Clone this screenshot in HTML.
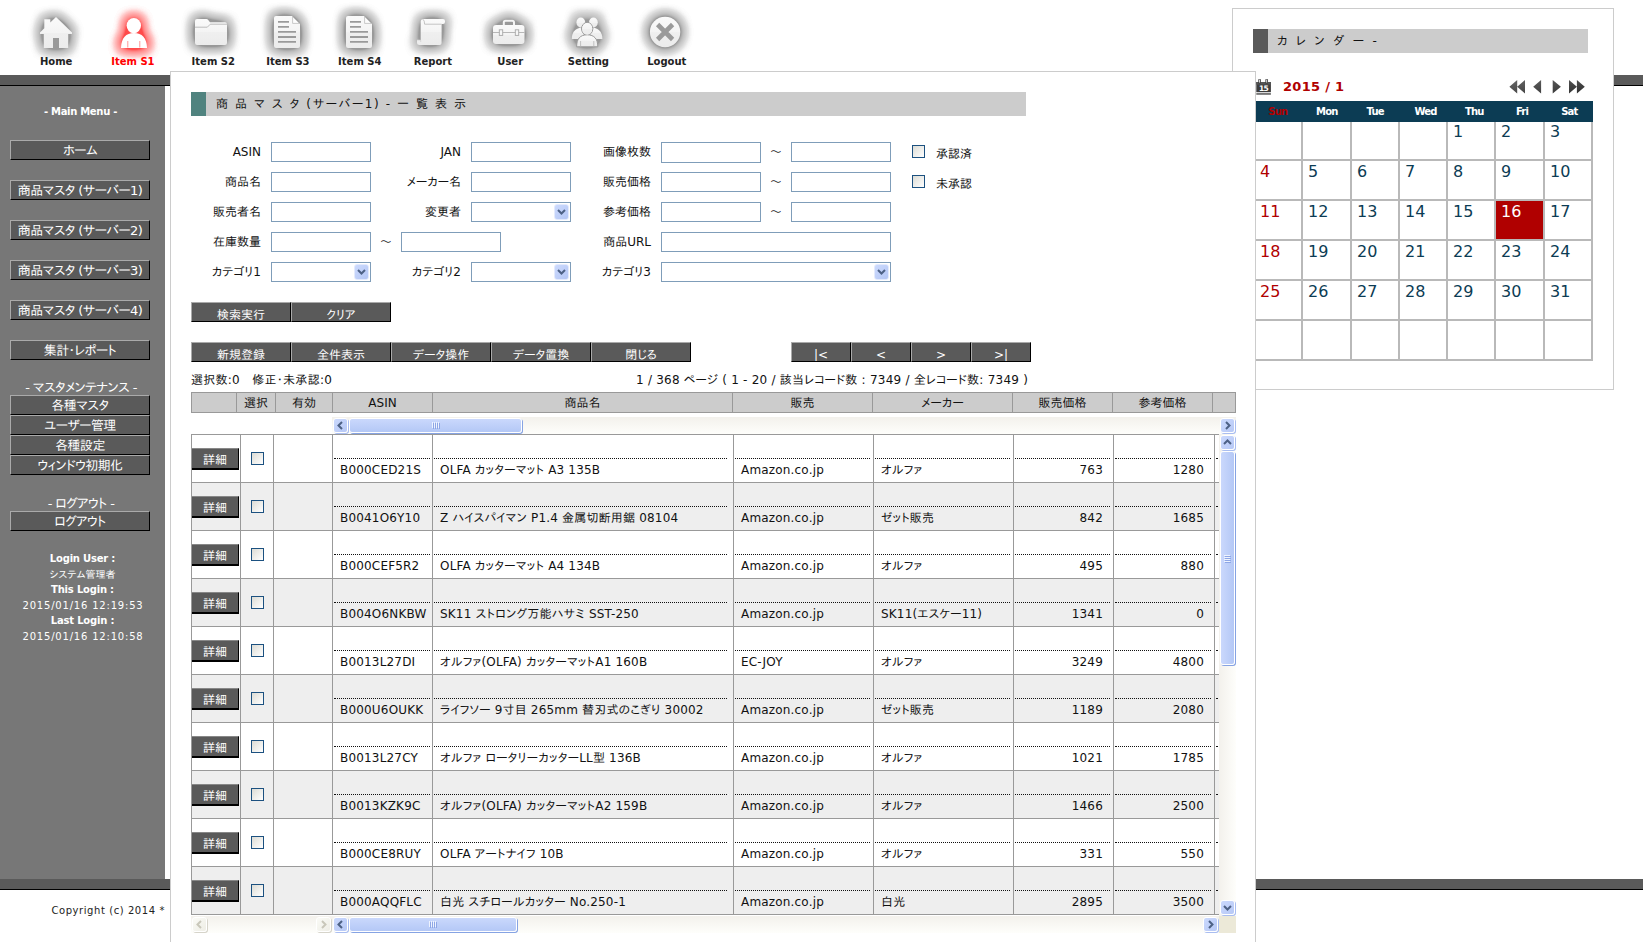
<!DOCTYPE html>
<html lang="ja"><head><meta charset="utf-8"><title>商品マスタ (サーバー1) - 一覧表示</title>
<style>
html,body{margin:0;padding:0;}
body{width:1643px;height:942px;overflow:hidden;background:#fff;position:relative;
 font-family:"DejaVu Sans","Liberation Sans","IPAPGothic","Noto Sans CJK JP",sans-serif;font-size:12px;color:#111;font-feature-settings:"palt";}
div,span,table,td,th{box-sizing:border-box;}
.abs{position:absolute;}
#topbar{position:absolute;left:0;top:75px;width:1643px;height:11px;background:#5a5a5a;border-bottom:1px solid #000;}
#botbar{position:absolute;left:0;top:879px;width:1643px;height:11px;background:#5a5a5a;border-bottom:1px solid #000;}
#side{position:absolute;left:0;top:86px;width:165px;height:793px;background:#777;color:#fff;}
#main{position:absolute;left:170px;top:71px;width:1086px;height:880px;background:#fff;border:1px solid #ccc;}
#cal{position:absolute;left:1232px;top:8px;width:382px;height:382px;background:#fff;border:1px solid #ccc;}
.nav{position:absolute;top:0;width:90px;height:72px;text-align:center;}
.nav svg{position:absolute;left:13px;top:0;}
.nav b{position:absolute;left:0;width:90px;top:56px;font-size:10px;line-height:12px;color:#222;font-weight:bold;}
.nav.on b{color:#f00;}
.sbtn{position:absolute;left:10px;width:140px;height:20px;background:#5a5a5a;border:1px solid;border-color:#aaa #000 #000 #aaa;
 color:#fff;font-size:13px;line-height:20px;text-align:center;letter-spacing:-0.6px;}
.shead{position:absolute;left:0;width:162px;text-align:center;color:#fff;font-size:13px;line-height:15px;letter-spacing:-0.6px;}
.sinfo{position:absolute;left:0;width:165px;text-align:center;color:#fff;font-size:10px;line-height:15.5px;}
.sinfo b{letter-spacing:-0.2px;}
.sinfo .dt{letter-spacing:0.8px;margin-left:1px;}
.title{position:absolute;background:#ccc;height:24px;line-height:24px;font-size:12px;color:#111;white-space:pre;}
.title i{position:absolute;left:0;top:0;width:15px;height:24px;}
.lbl{position:absolute;width:80px;text-align:right;font-size:12px;line-height:20px;height:20px;white-space:nowrap;}
.inp{position:absolute;height:20px;border:1px solid #7f9db9;background:#fff;}
.sel{position:absolute;height:20px;border:1px solid #7f9db9;background:#fff;}
.sel i{position:absolute;right:1px;top:1px;width:13px;height:14px;border-radius:3px;background:linear-gradient(135deg,#ccdafd,#b4c6f5);border:1px solid #e3eafd;box-sizing:content-box;}
.sel svg{position:absolute;right:4px;top:6px;}
.cb{position:absolute;width:13px;height:13px;border:1px solid #1c5180;background:linear-gradient(135deg,#dcdcd5,#fff);}
.btn{position:absolute;height:20px;background:#5a5a5a;color:#fff;font-size:12px;line-height:24px;text-align:center;border:1px solid;border-color:#aaa #000 #000 #aaa;white-space:pre;overflow:hidden;}
.hd{position:absolute;top:392px;height:21px;background:#ccc;border:1px solid #999;border-left:none;text-align:center;font-size:12px;line-height:21px;}
.row{position:absolute;left:191px;width:1029px;height:49px;border:1px solid #999;}
.row.alt{background:#eee;}
.row .c{position:absolute;top:0;height:47px;border-left:1px solid #999;}
.row .d{position:absolute;left:1px;right:6px;top:23px;height:24px;border-top:1px dotted #111;font-size:12px;line-height:22px;padding-left:6px;white-space:nowrap;overflow:hidden;letter-spacing:0.18px;}
.row .d.r{text-align:right;padding-right:3px;}
.det{position:absolute;left:0;top:13px;width:47px;height:22px;background:#5a5a5a;border-bottom:2px solid #000;border-right:1px solid #000;border-top:1px solid #888;color:#fff;text-align:center;line-height:23px;font-size:12px;}

.trk{position:absolute;background:linear-gradient(#f3f1ec,#fefefb);}
.trkv{position:absolute;background:linear-gradient(90deg,#f3f1ec,#fefefb);}
.sb{position:absolute;width:15px;height:15px;border:1px solid #fff;border-radius:3px;background:linear-gradient(135deg,#cbd9fd,#b6c8f6);box-shadow:1px 1px 0 #a9bdf0;}
.sb.dis{background:linear-gradient(135deg,#fafaf6,#eeede5);box-shadow:1px 1px 0 #d6d4ca;border-color:#fff;}
.sb svg{position:absolute;left:0;top:0;}
.th{position:absolute;border:1px solid #fff;border-radius:3px;box-shadow:1px 1px 0 #86a3e3;}
.thh{background:linear-gradient(#cad8fc,#b4c8f6);}
.thv{background:linear-gradient(90deg,#cad8fc,#b4c8f6);}
</style></head>
<body>
<div id="topbar"></div>
<div id="botbar"></div>
<svg width="0" height="0" style="position:absolute"><defs><filter id="gl" color-interpolation-filters="sRGB" x="-100%" y="-100%" width="300%" height="300%"><feGaussianBlur in="SourceAlpha" stdDeviation="6"/><feComponentTransfer result="a"><feFuncA type="table" tableValues="0 .27 .41 .5 .57 .65 .74 .87 1 1 1 1 1 1 1 1 1 1 1 1 1"/></feComponentTransfer><feFlood flood-color="#999"/><feComposite in2="a" operator="in"/></filter><filter id="glr" color-interpolation-filters="sRGB" x="-100%" y="-100%" width="300%" height="300%"><feGaussianBlur in="SourceAlpha" stdDeviation="6"/><feComponentTransfer result="a"><feFuncA type="table" tableValues="0 .27 .41 .5 .57 .65 .74 .87 1 1 1 1 1 1 1 1 1 1 1 1 1"/></feComponentTransfer><feFlood flood-color="#ff4a4a"/><feComposite in2="a" operator="in"/></filter><linearGradient id="ig" x1="0" y1="0" x2="0" y2="1"><stop offset="0" stop-color="#fafafa"/><stop offset="0.5" stop-color="#f4f4f4"/><stop offset="0.52" stop-color="#efefef"/><stop offset="1" stop-color="#ececec"/></linearGradient></defs></svg>
<div id="nav">
<div class="nav" style="left:11.2px"><svg style="left:12.8px" width="64" height="64" viewBox="0 0 64 64"><g transform="translate(16,17)"><g filter="url(#gl)"><path d="M16 0L32 15.5V17H28.2V31H3.8V17H0V15.5L4.3 11.3V2.2H10.3V5.6z"/></g><g fill="url(#ig)"><path d="M16 0L32 15.5V17H28.2V31H19V21H13V31H3.8V17H0V15.5L4.3 11.3V2.2H10.3V5.6z"/></g></g></svg><b>Home</b></div>
<div class="nav on" style="left:87.9px"><svg style="left:13.9px" width="64" height="64" viewBox="0 0 64 64"><g transform="translate(16,17)"><g filter="url(#glr)"><ellipse cx="15.8" cy="8.6" rx="7.2" ry="7.6"/><path d="M3 31C3.2 21 8 16 16 16S28.8 21 29 31z"/></g><g fill="#fff"><ellipse cx="15.8" cy="8.6" rx="7.2" ry="7.6"/><path d="M3 31C3.2 21 8 16 16 16S28.8 21 29 31z"/><path d="M9.8 24V30.5M21.8 24V30.5" fill="none" stroke="#ff8a8a" stroke-width="0.9"/></g></g></svg><b>Item S1</b></div>
<div class="nav" style="left:168.3px"><svg style="left:10.9px" width="64" height="64" viewBox="0 0 64 64"><g transform="translate(16,17)"><g filter="url(#gl)"><path d="M0 4Q0 2 2 2H11.5Q12.5 2 13.2 3L15 5.3H30Q32 5.3 32 7.3V26Q32 28 30 28H2Q0 28 0 26z"/></g><g fill="url(#ig)"><path d="M0 4Q0 2 2 2H11.5Q12.5 2 13.2 3L15 5.3H30Q32 5.3 32 7.3V26Q32 28 30 28H2Q0 28 0 26z"/><path d="M0 10.2H12.3L15.3 7.2H32" fill="none" stroke="#b5b5b5" stroke-width="0.9"/></g></g></svg><b>Item S2</b></div>
<div class="nav" style="left:242.9px"><svg style="left:12.1px" width="64" height="64" viewBox="0 0 64 64"><g transform="translate(16,17)"><g filter="url(#gl)"><path d="M5 -1H21L29 7V29Q29 31 27 31H5Q3 31 3 29V1Q3 -1 5 -1z"/></g><g fill="url(#ig)"><path d="M5 -1H21L29 7V29Q29 31 27 31H5Q3 31 3 29V1Q3 -1 5 -1z"/><path d="M21.6 -0.4L28.4 6.4H21.6z" fill="#fdfdfd" stroke="#b4b4b4" stroke-width="0.7"/><path d="M7 4.9H18M7 9.8H18M7 14.9H25M7 20H25M7 24.9H25" fill="none" stroke="#9a9a9a" stroke-width="1.8"/></g></g></svg><b>Item S3</b></div>
<div class="nav" style="left:314.8px"><svg style="left:12.3px" width="64" height="64" viewBox="0 0 64 64"><g transform="translate(16,17)"><g filter="url(#gl)"><path d="M5 -1H21L29 7V29Q29 31 27 31H5Q3 31 3 29V1Q3 -1 5 -1z"/></g><g fill="url(#ig)"><path d="M5 -1H21L29 7V29Q29 31 27 31H5Q3 31 3 29V1Q3 -1 5 -1z"/><path d="M21.6 -0.4L28.4 6.4H21.6z" fill="#fdfdfd" stroke="#b4b4b4" stroke-width="0.7"/><path d="M7 4.9H18M7 9.8H18M7 14.9H25M7 20H25M7 24.9H25" fill="none" stroke="#9a9a9a" stroke-width="1.8"/></g></g></svg><b>Item S4</b></div>
<div class="nav" style="left:387.9px"><svg style="left:11.1px" width="64" height="64" viewBox="0 0 64 64"><g transform="translate(16,17)"><g filter="url(#gl)"><path d="M8.5 2H28Q30 2 30 4V5Q30 7 28 7H26.6V26Q26.6 28 24.6 28H4.5Q2 28 2 25.5V23H5.7V5Q5.7 2 8.5 2z"/></g><g fill="url(#ig)"><path d="M8.5 2H28Q30 2 30 4V5Q30 7 28 7H26.6V26Q26.6 28 24.6 28H4.5Q2 28 2 25.5V23H5.7V5Q5.7 2 8.5 2z"/><path d="M8 2.3Q9.6 3.5 9.6 7.2H26.6" fill="none" stroke="#bdbdbd" stroke-width="0.9"/><path d="M2 23H5.7V25" fill="none" stroke="#cfcfcf" stroke-width="0.7"/></g></g></svg><b>Report</b></div>
<div class="nav" style="left:465.2px"><svg style="left:11.5px" width="64" height="64" viewBox="0 0 64 64"><g transform="translate(16,17)"><g filter="url(#gl)"><path d="M0 11Q0 8 3 8H28.5Q31.5 8 31.5 11V24Q31.5 27 28.5 27H3Q0 27 0 24z"/><path d="M9.8 8V5Q9.8 2.8 12 2.8H20Q22 2.8 22 5V8z"/></g><g fill="url(#ig)"><path d="M0 11Q0 8 3 8H28.5Q31.5 8 31.5 11V24Q31.5 27 28.5 27H3Q0 27 0 24z"/><path d="M10.8 8V5.6Q10.8 3.8 12.6 3.8H19.2Q21 3.8 21 5.6V8" fill="none" stroke="#f4f4f4" stroke-width="2"/><path d="M0 15.5H31.5" fill="none" stroke="#b0b0b0" stroke-width="0.9"/><rect x="6.3" y="12.8" width="3.4" height="5.6" fill="#f6f6f6" stroke="#a8a8a8" stroke-width="0.9"/><rect x="22.3" y="12.8" width="3.4" height="5.6" fill="#f6f6f6" stroke="#a8a8a8" stroke-width="0.9"/></g></g></svg><b>User</b></div>
<div class="nav" style="left:543.4px"><svg style="left:11.6px" width="64" height="64" viewBox="0 0 64 64"><g transform="translate(16,17)"><g filter="url(#gl)"><ellipse cx="9.8" cy="5.5" rx="4.4" ry="5"/><ellipse cx="22.4" cy="5.5" rx="4.4" ry="5"/><path d="M0.8 22C0.8 15 4 12 9.5 10.5H22.7C28 12 31.4 15 31.4 22z"/><path d="M5.6 29.8C5.6 22 9 17.8 16.2 17.8S26.8 22 26.8 29.8z"/></g><g fill="url(#ig)"><ellipse cx="9.8" cy="5.5" rx="4.4" ry="5"/><ellipse cx="22.4" cy="5.5" rx="4.4" ry="5"/><path d="M0.8 22C0.8 15 4 12 9.5 10.5L13 18L8 22z"/><path d="M31.4 22C31.4 15 28 12 22.7 10.5L19 18L24 22z"/><ellipse cx="16.2" cy="11.8" rx="5.6" ry="6.4" stroke="#9a9a9a" stroke-width="1"/><path d="M5.6 29.8C5.6 22 9 17.8 16.2 17.8S26.8 22 26.8 29.8z" stroke="#9a9a9a" stroke-width="1"/><ellipse cx="16.2" cy="11.8" rx="5.1" ry="5.9"/><path d="M9.6 24V29.5M22.8 24V29.5" fill="none" stroke="#b5b5b5" stroke-width="0.8"/></g></g></svg><b>Setting</b></div>
<div class="nav" style="left:621.8px"><svg style="left:11.3px" width="64" height="64" viewBox="0 0 64 64"><g transform="translate(16,17)"><g filter="url(#gl)"><circle cx="16.1" cy="15" r="15.2"/></g><g fill="url(#ig)"><circle cx="16.1" cy="15" r="15.2"/><path d="M8.6 7.5L23.6 22.5M23.6 7.5L8.6 22.5" fill="none" stroke="#9a9a9a" stroke-width="4.6"/></g></g></svg><b>Logout</b></div>
</div>
<div id="side">
<div class="sinfo" style="top:18px;font-weight:bold;left:-2px;letter-spacing:-0.3px">- Main Menu -</div>
<div class="sbtn" style="top:54px">ホーム</div>
<div class="sbtn" style="top:94px">商品マスタ (サーバー1)</div>
<div class="sbtn" style="top:134px">商品マスタ (サーバー2)</div>
<div class="sbtn" style="top:174px">商品マスタ (サーバー3)</div>
<div class="sbtn" style="top:214px">商品マスタ (サーバー4)</div>
<div class="sbtn" style="top:254px">集計･レポート</div>
<div class="shead" style="top:294px">- マスタメンテナンス -</div>
<div class="sbtn" style="top:309px">各種マスタ</div>
<div class="sbtn" style="top:329px">ユーザー管理</div>
<div class="sbtn" style="top:349px">各種設定</div>
<div class="sbtn" style="top:369px">ウィンドウ初期化</div>
<div class="shead" style="top:410px">- ログアウト -</div>
<div class="sbtn" style="top:425px">ログアウト</div>
<div class="sinfo" style="top:465px"><b>Login User :</b><br>システム管理者<br><b>This Login :</b><br><span class="dt">2015/01/16 12:19:53</span><br><b>Last Login :</b><br><span class="dt">2015/01/16 12:10:58</span></div>
</div>
<div class="abs" style="left:0;top:904px;width:165px;text-align:right;font-size:10px;line-height:14px;letter-spacing:0.57px;color:#222">Copyright (c) 2014 *</div>
<div id="cal">
<div class="title" style="left:20px;top:20px;width:335px;padding-left:24px;letter-spacing:2.35px"><i style="background:#5a5a5a"></i>カ レ ン ダ ー -</div>
<svg class="abs" style="left:23px;top:70px" width="16" height="17" viewBox="0 0 16 17"><rect x="0.3" y="3" width="14.6" height="10.2" fill="#3c3c3c"/><rect x="0.3" y="3" width="14.6" height="2.6" fill="#555"/><rect x="0.3" y="14.3" width="14.6" height="1.3" fill="#3c3c3c"/><path d="M3.6 0.3V4.4M10.7 0.3V4.4" stroke="#3c3c3c" stroke-width="2.6"/><path d="M3.6 0.8V3.6M10.7 0.8V3.6" stroke="#e8e8e8" stroke-width="1"/><text x="7.6" y="11.9" text-anchor="middle" font-family="DejaVu Sans,Liberation Sans,sans-serif" font-weight="bold" font-size="7.5" fill="#fff" letter-spacing="-0.5">15</text></svg>
<div class="abs" style="left:50px;top:70px;font-size:13px;font-weight:bold;color:#b00000;line-height:16px;white-space:pre;letter-spacing:0.3px">2015 / 1</div>
<svg class="abs" style="left:275px;top:70px" width="80" height="16" viewBox="0 0 80 16"><defs><linearGradient id="ag" x1="0" y1="0" x2="1" y2="1"><stop offset="0" stop-color="#666"/><stop offset="1" stop-color="#2e2e2e"/></linearGradient></defs><path fill="url(#ag)" d="M9.2 1.1V14.6L1.4 7.85zM17 1.1V14.6L9.2 7.85zM33.1 1.1V14.6L25.2 7.85zM44.7 1.1V14.6L52.9 7.85zM61 1.1V14.6L68.9 7.85zM68.9 1.1V14.6L76.8 7.85z"/></svg>
<table class="abs" cellspacing="0" cellpadding="0" style="left:20px;top:110px;border-collapse:separate;table-layout:fixed;width:340px;border:1px solid #b9b9b9;font-size:16px;color:#0c3c54"><colgroup><col style="width:48px"><col style="width:49px"><col style="width:48px"><col style="width:48px"><col style="width:48px"><col style="width:49px"><col style="width:48px"></colgroup>
<tr><td style="height:40px;border:1px solid #b9b9b9;vertical-align:top;padding:1px 0 0 5px;line-height:20px;color:#b00000;"></td><td style="height:40px;border:1px solid #b9b9b9;vertical-align:top;padding:1px 0 0 5px;line-height:20px;"></td><td style="height:40px;border:1px solid #b9b9b9;vertical-align:top;padding:1px 0 0 5px;line-height:20px;"></td><td style="height:40px;border:1px solid #b9b9b9;vertical-align:top;padding:1px 0 0 5px;line-height:20px;"></td><td style="height:40px;border:1px solid #b9b9b9;vertical-align:top;padding:1px 0 0 5px;line-height:20px;">1</td><td style="height:40px;border:1px solid #b9b9b9;vertical-align:top;padding:1px 0 0 5px;line-height:20px;">2</td><td style="height:40px;border:1px solid #b9b9b9;vertical-align:top;padding:1px 0 0 5px;line-height:20px;">3</td></tr>
<tr><td style="height:40px;border:1px solid #b9b9b9;vertical-align:top;padding:1px 0 0 5px;line-height:20px;color:#b00000;">4</td><td style="height:40px;border:1px solid #b9b9b9;vertical-align:top;padding:1px 0 0 5px;line-height:20px;">5</td><td style="height:40px;border:1px solid #b9b9b9;vertical-align:top;padding:1px 0 0 5px;line-height:20px;">6</td><td style="height:40px;border:1px solid #b9b9b9;vertical-align:top;padding:1px 0 0 5px;line-height:20px;">7</td><td style="height:40px;border:1px solid #b9b9b9;vertical-align:top;padding:1px 0 0 5px;line-height:20px;">8</td><td style="height:40px;border:1px solid #b9b9b9;vertical-align:top;padding:1px 0 0 5px;line-height:20px;">9</td><td style="height:40px;border:1px solid #b9b9b9;vertical-align:top;padding:1px 0 0 5px;line-height:20px;">10</td></tr>
<tr><td style="height:40px;border:1px solid #b9b9b9;vertical-align:top;padding:1px 0 0 5px;line-height:20px;color:#b00000;">11</td><td style="height:40px;border:1px solid #b9b9b9;vertical-align:top;padding:1px 0 0 5px;line-height:20px;">12</td><td style="height:40px;border:1px solid #b9b9b9;vertical-align:top;padding:1px 0 0 5px;line-height:20px;">13</td><td style="height:40px;border:1px solid #b9b9b9;vertical-align:top;padding:1px 0 0 5px;line-height:20px;">14</td><td style="height:40px;border:1px solid #b9b9b9;vertical-align:top;padding:1px 0 0 5px;line-height:20px;">15</td><td style="height:40px;border:1px solid #b9b9b9;vertical-align:top;padding:1px 0 0 5px;line-height:20px;background:#b00000;color:#fff;">16</td><td style="height:40px;border:1px solid #b9b9b9;vertical-align:top;padding:1px 0 0 5px;line-height:20px;">17</td></tr>
<tr><td style="height:40px;border:1px solid #b9b9b9;vertical-align:top;padding:1px 0 0 5px;line-height:20px;color:#b00000;">18</td><td style="height:40px;border:1px solid #b9b9b9;vertical-align:top;padding:1px 0 0 5px;line-height:20px;">19</td><td style="height:40px;border:1px solid #b9b9b9;vertical-align:top;padding:1px 0 0 5px;line-height:20px;">20</td><td style="height:40px;border:1px solid #b9b9b9;vertical-align:top;padding:1px 0 0 5px;line-height:20px;">21</td><td style="height:40px;border:1px solid #b9b9b9;vertical-align:top;padding:1px 0 0 5px;line-height:20px;">22</td><td style="height:40px;border:1px solid #b9b9b9;vertical-align:top;padding:1px 0 0 5px;line-height:20px;">23</td><td style="height:40px;border:1px solid #b9b9b9;vertical-align:top;padding:1px 0 0 5px;line-height:20px;">24</td></tr>
<tr><td style="height:40px;border:1px solid #b9b9b9;vertical-align:top;padding:1px 0 0 5px;line-height:20px;color:#b00000;">25</td><td style="height:40px;border:1px solid #b9b9b9;vertical-align:top;padding:1px 0 0 5px;line-height:20px;">26</td><td style="height:40px;border:1px solid #b9b9b9;vertical-align:top;padding:1px 0 0 5px;line-height:20px;">27</td><td style="height:40px;border:1px solid #b9b9b9;vertical-align:top;padding:1px 0 0 5px;line-height:20px;">28</td><td style="height:40px;border:1px solid #b9b9b9;vertical-align:top;padding:1px 0 0 5px;line-height:20px;">29</td><td style="height:40px;border:1px solid #b9b9b9;vertical-align:top;padding:1px 0 0 5px;line-height:20px;">30</td><td style="height:40px;border:1px solid #b9b9b9;vertical-align:top;padding:1px 0 0 5px;line-height:20px;">31</td></tr>
<tr><td style="height:40px;border:1px solid #b9b9b9;vertical-align:top;padding:1px 0 0 5px;line-height:20px;color:#b00000;"></td><td style="height:40px;border:1px solid #b9b9b9;vertical-align:top;padding:1px 0 0 5px;line-height:20px;"></td><td style="height:40px;border:1px solid #b9b9b9;vertical-align:top;padding:1px 0 0 5px;line-height:20px;"></td><td style="height:40px;border:1px solid #b9b9b9;vertical-align:top;padding:1px 0 0 5px;line-height:20px;"></td><td style="height:40px;border:1px solid #b9b9b9;vertical-align:top;padding:1px 0 0 5px;line-height:20px;"></td><td style="height:40px;border:1px solid #b9b9b9;vertical-align:top;padding:1px 0 0 5px;line-height:20px;"></td><td style="height:40px;border:1px solid #b9b9b9;vertical-align:top;padding:1px 0 0 5px;line-height:20px;"></td></tr>
</table>
<div class="abs" style="left:21px;top:92px;width:339px;height:21px;background:#0c3c54;color:#fff;font-size:10px;font-weight:bold;line-height:21px;letter-spacing:-0.8px"><span class="abs" style="left:3.9px;top:0;width:40px;text-align:center;color:#b00000;">Sun</span><span class="abs" style="left:52.8px;top:0;width:40px;text-align:center;">Mon</span><span class="abs" style="left:101.1px;top:0;width:40px;text-align:center;">Tue</span><span class="abs" style="left:151.5px;top:0;width:40px;text-align:center;">Wed</span><span class="abs" style="left:200.3px;top:0;width:40px;text-align:center;">Thu</span><span class="abs" style="left:248px;top:0;width:40px;text-align:center;">Fri</span><span class="abs" style="left:295.4px;top:0;width:40px;text-align:center;">Sat</span></div>
</div>
<div id="main">
<div class="title" style="left:20px;top:20px;width:835px;padding-left:25px;letter-spacing:1.586px"><i style="background:#50837f"></i>商 品 マ ス タ (サーバー1) - 一 覧 表 示</div>
<div class="lbl" style="left:10px;top:70px">ASIN</div>
<div class="lbl" style="left:10px;top:100px">商品名</div>
<div class="lbl" style="left:10px;top:130px">販売者名</div>
<div class="lbl" style="left:10px;top:160px">在庫数量</div>
<div class="lbl" style="left:10px;top:190px">カテゴリ1</div>
<div class="inp" style="left:100px;top:70px;width:100px;height:20px"></div>
<div class="inp" style="left:100px;top:100px;width:100px;height:20px"></div>
<div class="inp" style="left:100px;top:130px;width:100px;height:20px"></div>
<div class="inp" style="left:100px;top:160px;width:100px;height:20px"></div>
<div class="sel" style="left:100px;top:190px;width:100px"><i></i><svg width="9" height="7" viewBox="0 0 9 7"><path d="M1 1l3.5 3.5L8 1" fill="none" stroke="#4d6185" stroke-width="2"/></svg></div>
<div class="abs" style="left:205px;top:160px;width:20px;text-align:center;line-height:20px">～</div>
<div class="inp" style="left:230px;top:160px;width:100px;height:20px"></div>
<div class="lbl" style="left:210px;top:70px">JAN</div>
<div class="lbl" style="left:210px;top:100px">メーカー名</div>
<div class="lbl" style="left:210px;top:130px">変更者</div>
<div class="lbl" style="left:210px;top:190px">カテゴリ2</div>
<div class="inp" style="left:300px;top:70px;width:100px;height:20px"></div>
<div class="inp" style="left:300px;top:100px;width:100px;height:20px"></div>
<div class="sel" style="left:300px;top:130px;width:100px"><i></i><svg width="9" height="7" viewBox="0 0 9 7"><path d="M1 1l3.5 3.5L8 1" fill="none" stroke="#4d6185" stroke-width="2"/></svg></div>
<div class="sel" style="left:300px;top:190px;width:100px"><i></i><svg width="9" height="7" viewBox="0 0 9 7"><path d="M1 1l3.5 3.5L8 1" fill="none" stroke="#4d6185" stroke-width="2"/></svg></div>
<div class="lbl" style="left:400px;top:70px">画像枚数</div>
<div class="lbl" style="left:400px;top:100px">販売価格</div>
<div class="lbl" style="left:400px;top:130px">参考価格</div>
<div class="lbl" style="left:400px;top:160px">商品URL</div>
<div class="lbl" style="left:400px;top:190px">カテゴリ3</div>
<div class="inp" style="left:490px;top:70px;width:100px;height:21px"></div>
<div class="inp" style="left:490px;top:100px;width:100px;height:20px"></div>
<div class="inp" style="left:490px;top:130px;width:100px;height:20px"></div>
<div class="abs" style="left:595px;top:70px;width:20px;text-align:center;line-height:20px">～</div>
<div class="inp" style="left:620px;top:70px;width:100px;height:20px"></div>
<div class="abs" style="left:595px;top:100px;width:20px;text-align:center;line-height:20px">～</div>
<div class="inp" style="left:620px;top:100px;width:100px;height:20px"></div>
<div class="abs" style="left:595px;top:130px;width:20px;text-align:center;line-height:20px">～</div>
<div class="inp" style="left:620px;top:130px;width:100px;height:20px"></div>
<div class="inp" style="left:490px;top:160px;width:230px;height:20px"></div>
<div class="sel" style="left:490px;top:190px;width:230px"><i></i><svg width="9" height="7" viewBox="0 0 9 7"><path d="M1 1l3.5 3.5L8 1" fill="none" stroke="#4d6185" stroke-width="2"/></svg></div>
<div class="cb" style="left:741px;top:73px"></div>
<div class="cb" style="left:741px;top:103px"></div>
<div class="abs" style="left:765px;top:75px;line-height:14px">承認済</div>
<div class="abs" style="left:765px;top:105px;line-height:14px">未承認</div>
<div class="btn" style="left:20px;top:230px;width:100px">検索実行</div>
<div class="btn" style="left:120px;top:230px;width:100px">クリア</div>
<div class="btn" style="left:20px;top:270px;width:100px">新規登録</div>
<div class="btn" style="left:120px;top:270px;width:100px">全件表示</div>
<div class="btn" style="left:220px;top:270px;width:100px">データ操作</div>
<div class="btn" style="left:320px;top:270px;width:100px">データ置換</div>
<div class="btn" style="left:420px;top:270px;width:100px">閉じる</div>
<div class="btn" style="left:620px;top:270px;width:60px">|&lt;</div>
<div class="btn" style="left:680px;top:270px;width:60px">&lt;</div>
<div class="btn" style="left:740px;top:270px;width:60px">&gt;</div>
<div class="btn" style="left:800px;top:270px;width:60px">&gt;|</div>
<div class="abs" style="left:20px;top:301px;line-height:14px;white-space:pre;letter-spacing:0.27px">選択数:0   修正･未承認:0</div>
<div class="abs" style="left:465px;top:301px;line-height:14px;white-space:pre;letter-spacing:0.23px">1 / 368 ページ ( 1 - 20 / 該当レコード数 : 7349 / 全レコード数: 7349 )</div>
<div class="hd" style="left:20px;top:320px;width:46px;border-left:1px solid #999;"></div>
<div class="hd" style="left:66px;top:320px;width:39px;">選択</div>
<div class="hd" style="left:105px;top:320px;width:57px;">有効</div>
<div class="hd" style="left:162px;top:320px;width:100px;">ASIN</div>
<div class="hd" style="left:262px;top:320px;width:300px;">商品名</div>
<div class="hd" style="left:562px;top:320px;width:140px;">販売</div>
<div class="hd" style="left:702px;top:320px;width:140px;">メーカー</div>
<div class="hd" style="left:842px;top:320px;width:100px;">販売価格</div>
<div class="hd" style="left:942px;top:320px;width:100px;">参考価格</div>
<div class="hd" style="left:1042px;top:320px;width:23px;"></div>
<div class="abs" style="left:20px;top:362px;width:1045px;height:481px;overflow:hidden">
<div class="row" style="left:0;top:0px"><div class="det">詳細</div><div class="c" style="left:48px;width:33px"><div class="cb" style="left:10px;top:17px"></div></div><div class="c" style="left:81px;width:59px"></div><div class="c" style="left:140px;width:100px"><div class="d" style="right:2px;">B000CED21S</div></div><div class="c" style="left:240px;width:301px"><div class="d" style="right:6px;">OLFA カッターマット A3 135B</div></div><div class="c" style="left:541px;width:140px"><div class="d" style="right:3px;">Amazon.co.jp</div></div><div class="c" style="left:681px;width:140px"><div class="d" style="right:3px;">オルファ</div></div><div class="c" style="left:821px;width:100px"><div class="d r" style="right:3px;padding-right:7px;">763</div></div><div class="c" style="left:921px;width:101px"><div class="d r" style="right:3px;padding-right:7px;">1280</div></div><div class="c" style="left:1022px;width:6px"><div class="d" style="right:0"></div></div></div>
<div class="row alt" style="left:0;top:48px"><div class="det">詳細</div><div class="c" style="left:48px;width:33px"><div class="cb" style="left:10px;top:17px"></div></div><div class="c" style="left:81px;width:59px"></div><div class="c" style="left:140px;width:100px"><div class="d" style="right:2px;">B0041O6Y10</div></div><div class="c" style="left:240px;width:301px"><div class="d" style="right:6px;">Z ハイスパイマン P1.4 金属切断用鋸 08104</div></div><div class="c" style="left:541px;width:140px"><div class="d" style="right:3px;">Amazon.co.jp</div></div><div class="c" style="left:681px;width:140px"><div class="d" style="right:3px;">ゼット販売</div></div><div class="c" style="left:821px;width:100px"><div class="d r" style="right:3px;padding-right:7px;">842</div></div><div class="c" style="left:921px;width:101px"><div class="d r" style="right:3px;padding-right:7px;">1685</div></div><div class="c" style="left:1022px;width:6px"><div class="d" style="right:0"></div></div></div>
<div class="row" style="left:0;top:96px"><div class="det">詳細</div><div class="c" style="left:48px;width:33px"><div class="cb" style="left:10px;top:17px"></div></div><div class="c" style="left:81px;width:59px"></div><div class="c" style="left:140px;width:100px"><div class="d" style="right:2px;">B000CEF5R2</div></div><div class="c" style="left:240px;width:301px"><div class="d" style="right:6px;">OLFA カッターマット A4 134B</div></div><div class="c" style="left:541px;width:140px"><div class="d" style="right:3px;">Amazon.co.jp</div></div><div class="c" style="left:681px;width:140px"><div class="d" style="right:3px;">オルファ</div></div><div class="c" style="left:821px;width:100px"><div class="d r" style="right:3px;padding-right:7px;">495</div></div><div class="c" style="left:921px;width:101px"><div class="d r" style="right:3px;padding-right:7px;">880</div></div><div class="c" style="left:1022px;width:6px"><div class="d" style="right:0"></div></div></div>
<div class="row alt" style="left:0;top:144px"><div class="det">詳細</div><div class="c" style="left:48px;width:33px"><div class="cb" style="left:10px;top:17px"></div></div><div class="c" style="left:81px;width:59px"></div><div class="c" style="left:140px;width:100px"><div class="d" style="right:2px;">B004O6NKBW</div></div><div class="c" style="left:240px;width:301px"><div class="d" style="right:6px;">SK11 ストロング万能ハサミ SST-250</div></div><div class="c" style="left:541px;width:140px"><div class="d" style="right:3px;">Amazon.co.jp</div></div><div class="c" style="left:681px;width:140px"><div class="d" style="right:3px;">SK11(エスケー11)</div></div><div class="c" style="left:821px;width:100px"><div class="d r" style="right:3px;padding-right:7px;">1341</div></div><div class="c" style="left:921px;width:101px"><div class="d r" style="right:3px;padding-right:7px;">0</div></div><div class="c" style="left:1022px;width:6px"><div class="d" style="right:0"></div></div></div>
<div class="row" style="left:0;top:192px"><div class="det">詳細</div><div class="c" style="left:48px;width:33px"><div class="cb" style="left:10px;top:17px"></div></div><div class="c" style="left:81px;width:59px"></div><div class="c" style="left:140px;width:100px"><div class="d" style="right:2px;">B0013L27DI</div></div><div class="c" style="left:240px;width:301px"><div class="d" style="right:6px;">オルファ(OLFA) カッターマットA1 160B</div></div><div class="c" style="left:541px;width:140px"><div class="d" style="right:3px;">EC-JOY</div></div><div class="c" style="left:681px;width:140px"><div class="d" style="right:3px;">オルファ</div></div><div class="c" style="left:821px;width:100px"><div class="d r" style="right:3px;padding-right:7px;">3249</div></div><div class="c" style="left:921px;width:101px"><div class="d r" style="right:3px;padding-right:7px;">4800</div></div><div class="c" style="left:1022px;width:6px"><div class="d" style="right:0"></div></div></div>
<div class="row alt" style="left:0;top:240px"><div class="det">詳細</div><div class="c" style="left:48px;width:33px"><div class="cb" style="left:10px;top:17px"></div></div><div class="c" style="left:81px;width:59px"></div><div class="c" style="left:140px;width:100px"><div class="d" style="right:2px;">B000U6OUKK</div></div><div class="c" style="left:240px;width:301px"><div class="d" style="right:6px;">ライフソー 9寸目 265mm 替刃式のこぎり 30002</div></div><div class="c" style="left:541px;width:140px"><div class="d" style="right:3px;">Amazon.co.jp</div></div><div class="c" style="left:681px;width:140px"><div class="d" style="right:3px;">ゼット販売</div></div><div class="c" style="left:821px;width:100px"><div class="d r" style="right:3px;padding-right:7px;">1189</div></div><div class="c" style="left:921px;width:101px"><div class="d r" style="right:3px;padding-right:7px;">2080</div></div><div class="c" style="left:1022px;width:6px"><div class="d" style="right:0"></div></div></div>
<div class="row" style="left:0;top:288px"><div class="det">詳細</div><div class="c" style="left:48px;width:33px"><div class="cb" style="left:10px;top:17px"></div></div><div class="c" style="left:81px;width:59px"></div><div class="c" style="left:140px;width:100px"><div class="d" style="right:2px;">B0013L27CY</div></div><div class="c" style="left:240px;width:301px"><div class="d" style="right:6px;">オルファ ロータリーカッターLL型 136B</div></div><div class="c" style="left:541px;width:140px"><div class="d" style="right:3px;">Amazon.co.jp</div></div><div class="c" style="left:681px;width:140px"><div class="d" style="right:3px;">オルファ</div></div><div class="c" style="left:821px;width:100px"><div class="d r" style="right:3px;padding-right:7px;">1021</div></div><div class="c" style="left:921px;width:101px"><div class="d r" style="right:3px;padding-right:7px;">1785</div></div><div class="c" style="left:1022px;width:6px"><div class="d" style="right:0"></div></div></div>
<div class="row alt" style="left:0;top:336px"><div class="det">詳細</div><div class="c" style="left:48px;width:33px"><div class="cb" style="left:10px;top:17px"></div></div><div class="c" style="left:81px;width:59px"></div><div class="c" style="left:140px;width:100px"><div class="d" style="right:2px;">B0013KZK9C</div></div><div class="c" style="left:240px;width:301px"><div class="d" style="right:6px;">オルファ(OLFA) カッターマットA2 159B</div></div><div class="c" style="left:541px;width:140px"><div class="d" style="right:3px;">Amazon.co.jp</div></div><div class="c" style="left:681px;width:140px"><div class="d" style="right:3px;">オルファ</div></div><div class="c" style="left:821px;width:100px"><div class="d r" style="right:3px;padding-right:7px;">1466</div></div><div class="c" style="left:921px;width:101px"><div class="d r" style="right:3px;padding-right:7px;">2500</div></div><div class="c" style="left:1022px;width:6px"><div class="d" style="right:0"></div></div></div>
<div class="row" style="left:0;top:384px"><div class="det">詳細</div><div class="c" style="left:48px;width:33px"><div class="cb" style="left:10px;top:17px"></div></div><div class="c" style="left:81px;width:59px"></div><div class="c" style="left:140px;width:100px"><div class="d" style="right:2px;">B000CE8RUY</div></div><div class="c" style="left:240px;width:301px"><div class="d" style="right:6px;">OLFA アートナイフ 10B</div></div><div class="c" style="left:541px;width:140px"><div class="d" style="right:3px;">Amazon.co.jp</div></div><div class="c" style="left:681px;width:140px"><div class="d" style="right:3px;">オルファ</div></div><div class="c" style="left:821px;width:100px"><div class="d r" style="right:3px;padding-right:7px;">331</div></div><div class="c" style="left:921px;width:101px"><div class="d r" style="right:3px;padding-right:7px;">550</div></div><div class="c" style="left:1022px;width:6px"><div class="d" style="right:0"></div></div></div>
<div class="row alt" style="left:0;top:432px"><div class="det">詳細</div><div class="c" style="left:48px;width:33px"><div class="cb" style="left:10px;top:17px"></div></div><div class="c" style="left:81px;width:59px"></div><div class="c" style="left:140px;width:100px"><div class="d" style="right:2px;">B000AQQFLC</div></div><div class="c" style="left:240px;width:301px"><div class="d" style="right:6px;">白光 スチロールカッター No.250-1</div></div><div class="c" style="left:541px;width:140px"><div class="d" style="right:3px;">Amazon.co.jp</div></div><div class="c" style="left:681px;width:140px"><div class="d" style="right:3px;">白光</div></div><div class="c" style="left:821px;width:100px"><div class="d r" style="right:3px;padding-right:7px;">2895</div></div><div class="c" style="left:921px;width:101px"><div class="d r" style="right:3px;padding-right:7px;">3500</div></div><div class="c" style="left:1022px;width:6px"><div class="d" style="right:0"></div></div></div>
</div>
<div class="trk" style="left:161px;top:345px;width:904px;height:17px"></div>
<div class="sb" style="left:162px;top:346px"><svg width="13" height="13" viewBox="0 0 13 13"><path d="M8 3L4.5 6.5L8 10" fill="none" stroke="#4d6185" stroke-width="2"/></svg></div>
<div class="sb" style="left:1049px;top:346px"><svg width="13" height="13" viewBox="0 0 13 13"><path d="M5 3L8.5 6.5L5 10" fill="none" stroke="#4d6185" stroke-width="2"/></svg></div>
<div class="th thh" style="left:178px;top:346px;width:173px;height:15px"></div>
<svg class="abs" style="left:261px;top:350px" width="9" height="7" viewBox="0 0 9 7"><path d="M.5 0V6M2.5 0V6M4.5 0V6M6.5 0V6" stroke="#eef3fe" stroke-width="1"/><path d="M1.5 1V7M3.5 1V7M5.5 1V7M7.5 1V7" stroke="#8da6e6" stroke-width="1"/></svg>
<div class="trkv" style="left:1048px;top:362px;width:17px;height:483px"></div>
<div class="sb" style="left:1049px;top:363px"><svg width="13" height="13" viewBox="0 0 13 13"><path d="M3 8L6.5 4.5L10 8" fill="none" stroke="#4d6185" stroke-width="2"/></svg></div>
<div class="sb" style="left:1049px;top:828px"><svg width="13" height="13" viewBox="0 0 13 13"><path d="M3 5L6.5 8.5L10 5" fill="none" stroke="#4d6185" stroke-width="2"/></svg></div>
<div class="th thv" style="left:1049px;top:379px;width:15px;height:214px"></div>
<svg class="abs" style="left:1053px;top:483px" width="7" height="9" viewBox="0 0 7 9"><path d="M0 .5H6M0 2.5H6M0 4.5H6M0 6.5H6" stroke="#eef3fe" stroke-width="1"/><path d="M1 1.5H7M1 3.5H7M1 5.5H7M1 7.5H7" stroke="#8da6e6" stroke-width="1"/></svg>
<div class="trk" style="left:20px;top:844px;width:141px;height:17px"></div>
<div class="sb dis" style="left:21px;top:845px"><svg width="13" height="13" viewBox="0 0 13 13"><path d="M8 3L4.5 6.5L8 10" fill="none" stroke="#c9c7ba" stroke-width="2"/></svg></div>
<div class="sb dis" style="left:145px;top:845px"><svg width="13" height="13" viewBox="0 0 13 13"><path d="M5 3L8.5 6.5L5 10" fill="none" stroke="#c9c7ba" stroke-width="2"/></svg></div>
<div class="trk" style="left:161px;top:844px;width:887px;height:17px"></div>
<div class="sb" style="left:162px;top:845px"><svg width="13" height="13" viewBox="0 0 13 13"><path d="M8 3L4.5 6.5L8 10" fill="none" stroke="#4d6185" stroke-width="2"/></svg></div>
<div class="sb" style="left:1032px;top:845px"><svg width="13" height="13" viewBox="0 0 13 13"><path d="M5 3L8.5 6.5L5 10" fill="none" stroke="#4d6185" stroke-width="2"/></svg></div>
<div class="th thh" style="left:178px;top:845px;width:168px;height:15px"></div>
<svg class="abs" style="left:258px;top:849px" width="9" height="7" viewBox="0 0 9 7"><path d="M.5 0V6M2.5 0V6M4.5 0V6M6.5 0V6" stroke="#eef3fe" stroke-width="1"/><path d="M1.5 1V7M3.5 1V7M5.5 1V7M7.5 1V7" stroke="#8da6e6" stroke-width="1"/></svg>
<div class="abs" style="left:1048px;top:844px;width:17px;height:17px;background:#ece9d8"></div>
</div>
</body></html>
